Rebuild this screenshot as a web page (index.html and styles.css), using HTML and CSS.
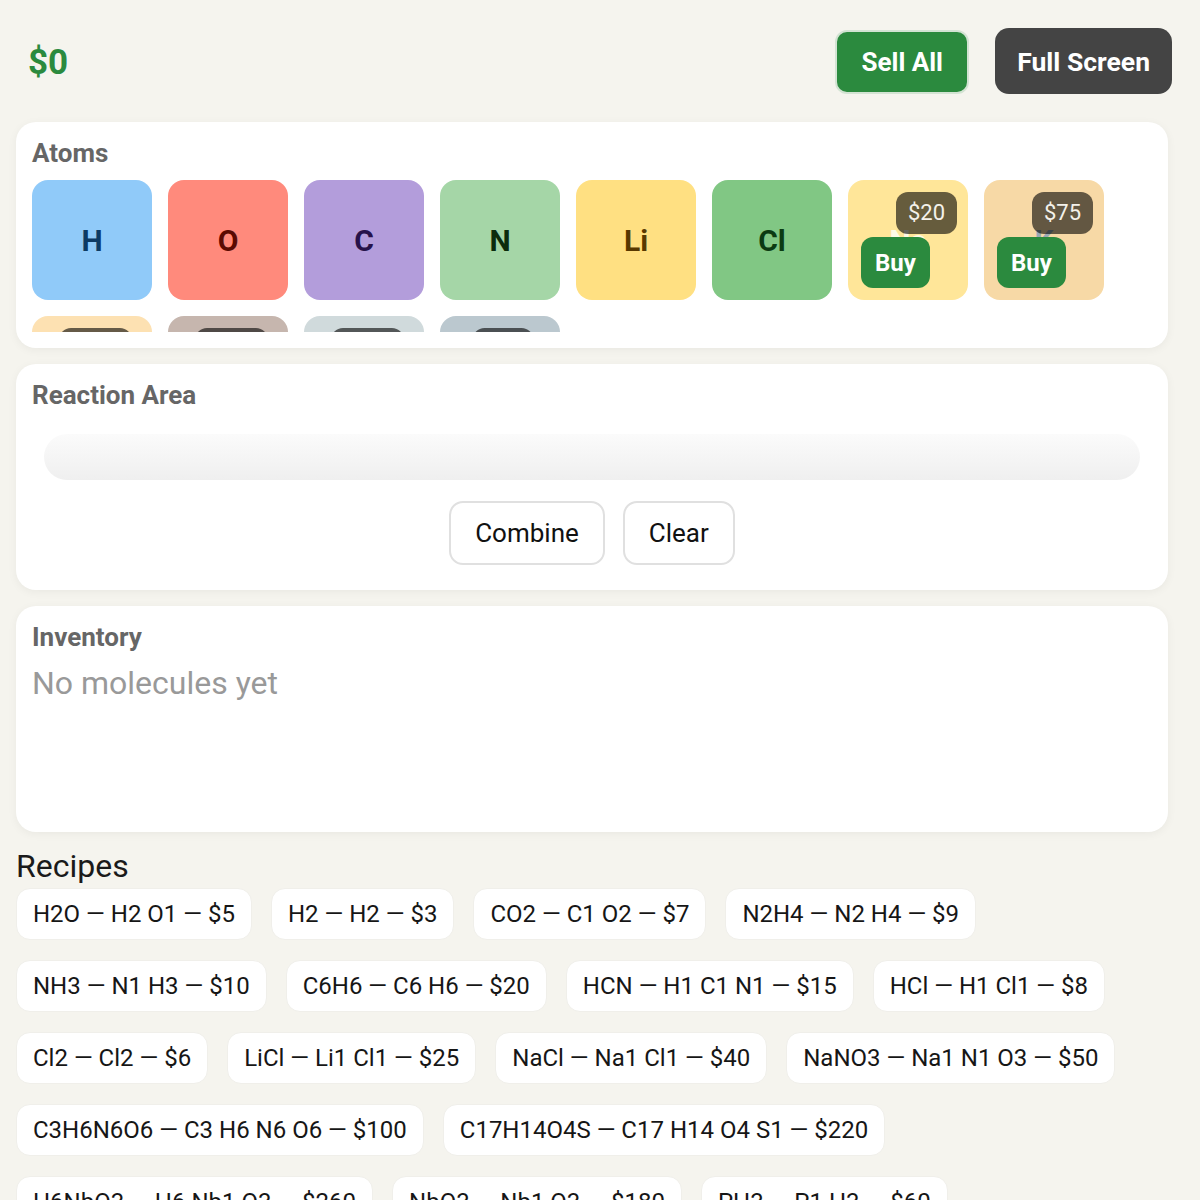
FILE: index.html
```html
<!DOCTYPE html>
<html lang="en">
<head>
  <meta charset="UTF-8">
  <title>Atom Lab</title>
  <link rel="stylesheet" href="styles.css">
</head>
<body>

  <div class="app">

    <!-- top bar -->
    <div class="topbar">
      <div class="money" id="money">$0</div>
      <button class="btn-sell">Sell All</button>
    </div>
    <button class="btn-full">Full Screen</button>

    <!-- atom shop -->
    <div class="panel">
      <div class="panel-title">Atoms</div>
      <div class="atoms">
        <div class="atom atom-h"><span class="sym">H</span></div>
        <div class="atom atom-o"><span class="sym">O</span></div>
        <div class="atom atom-c"><span class="sym">C</span></div>
        <div class="atom atom-n"><span class="sym">N</span></div>
        <div class="atom atom-li"><span class="sym">Li</span></div>
        <div class="atom atom-cl"><span class="sym">Cl</span></div>
        <div class="atom atom-na locked">
          <span class="sym">Na</span>
          <span class="price">$20</span>
          <button class="btn-buy">Buy</button>
        </div>
        <div class="atom atom-k locked">
          <span class="sym">K</span>
          <span class="price">$75</span>
          <button class="btn-buy">Buy</button>
        </div>
        <div class="atom atom-s locked row2">
          <span class="sym">S</span>
          <span class="price">$120</span>
          <button class="btn-buy">Buy</button>
        </div>
        <div class="atom atom-fe locked row2">
          <span class="sym">Fe</span>
          <span class="price">$150</span>
          <button class="btn-buy">Buy</button>
        </div>
        <div class="atom atom-nb locked row2">
          <span class="sym">Nb</span>
          <span class="price">$200</span>
          <button class="btn-buy">Buy</button>
        </div>
        <div class="atom atom-p locked row2">
          <span class="sym">P</span>
          <span class="price">$90</span>
          <button class="btn-buy">Buy</button>
        </div>
      </div>
    </div>

    <!-- mixing -->
    <div class="panel">
      <div class="panel-title">Reaction Area</div>
      <div class="dropzone"></div>
      <div class="actions">
        <button class="btn-plain">Combine</button>
        <button class="btn-plain">Clear</button>
      </div>
    </div>

    <!-- molecules made so far -->
    <div class="panel">
      <div class="panel-title">Inventory</div>
      <div class="empty">No molecules yet</div>
    </div>

    <h2 class="recipes-title">Recipes</h2>
    <div class="recipes">
      <div class="recipe">H2O — H2 O1 — $5</div>
      <div class="recipe">H2 — H2 — $3</div>
      <div class="recipe">CO2 — C1 O2 — $7</div>
      <div class="recipe">N2H4 — N2 H4 — $9</div>
      <div class="recipe">NH3 — N1 H3 — $10</div>
      <div class="recipe">C6H6 — C6 H6 — $20</div>
      <div class="recipe">HCN — H1 C1 N1 — $15</div>
      <div class="recipe">HCl — H1 Cl1 — $8</div>
      <div class="recipe">Cl2 — Cl2 — $6</div>
      <div class="recipe">LiCl — Li1 Cl1 — $25</div>
      <div class="recipe">NaCl — Na1 Cl1 — $40</div>
      <div class="recipe">NaNO3 — Na1 N1 O3 — $50</div>
      <div class="recipe">C3H6N6O6 — C3 H6 N6 O6 — $100</div>
      <div class="recipe">C17H14O4S — C17 H14 O4 S1 — $220</div>
      <div class="recipe">H6NbO3 — H6 Nb1 O3 — $260</div>
      <div class="recipe">NbO3 — Nb1 O3 — $180</div>
      <div class="recipe">PH3 — P1 H3 — $60</div>
    </div>

  </div>

</body>
</html>
```

FILE: styles.css
```css
* {
  box-sizing: border-box;
}
body {
  font-family: Roboto, "Liberation Sans", Arial, sans-serif;
  background: #f5f4ee;
  margin: 0;
  padding: 16px;
  color: #111;
}
button {
  font-family: inherit;
  cursor: pointer;
}
.app {
  max-width: 1152px;
}

/* top bar */
.topbar {
  display: flex;
  align-items: center;
  justify-content: space-between;
  height: 90px;
  padding: 2px 199px 0 12px;
  margin-bottom: 16px;
}
.money {
  color: #2b8a3e;
  font-size: 35px;
  font-weight: 700;
}
.btn-sell {
  height: 64px;
  padding: 0 24px;
  background: #2b8a3e;
  color: #fff;
  border: 2px solid #d3e3d3;
  border-radius: 12px;
  font-size: 26px;
  font-weight: 700;
}
.btn-full {
  position: fixed;
  top: 28px;
  right: 28px;
  height: 66px;
  padding: 0 22px;
  background: #444;
  color: #fff;
  border: none;
  border-radius: 14px;
  font-size: 26.5px;
  font-weight: 700;
}

/* panels */
.panel {
  background: #fff;
  border-radius: 20px;
  padding: 16px;
  min-height: 226px;
  margin-bottom: 16px;
  box-shadow: 0 2px 10px rgba(0,0,0,0.05);
}
.panel-title {
  color: #666;
  font-size: 26px;
  font-weight: 700;
  line-height: 30px;
}

/* atoms */
.atoms {
  display: grid;
  grid-template-columns: repeat(auto-fill, 120px);
  gap: 16px;
  height: 152px;
  overflow: hidden;
  margin-top: 12px;
}
.atom {
  position: relative;
  width: 120px;
  height: 120px;
  border-radius: 16px;
  display: flex;
  align-items: center;
  justify-content: center;
}
.sym {
  font-size: 30px;
  font-weight: 700;
}
.atom-h { background: #90caf9; color: #0d3a63; }
.atom-o { background: #ff8a7c; color: #5a0a02; }
.atom-c { background: #b39ddb; color: #27124a; }
.atom-n { background: #a5d6a7; color: #0c2c0c; }
.atom-li { background: #ffe082; color: #583800; }
.atom-cl { background: #81c784; color: #0b3b12; }
.atom-na { background: #ffe699; color: #fffbe8; }
.atom-k { background: #f7d9a6; color: #9aa8b4; }
.atom-s { background: #fde1b2; color: #fff; }
.atom-fe { background: #c6b6ae; color: #fff; }
.atom-nb { background: #d0dadc; color: #fff; }
.atom-p { background: #bbc8cf; color: #fff; }

.price {
  position: absolute;
  top: 12px;
  right: 11px;
  height: 42px;
  line-height: 42px;
  padding: 0 12px;
  border-radius: 12px;
  background: rgba(0,0,0,0.6);
  color: #f4f1ea;
  font-size: 22px;
}
.row2 .price {
  right: auto;
  left: 50%;
  transform: translateX(-45%);
}
.btn-buy {
  position: absolute;
  left: 13px;
  bottom: 12px;
  height: 51px;
  padding: 0 14px;
  background: #2b8a3e;
  color: #fff;
  border: none;
  border-radius: 12px;
  font-size: 24px;
  font-weight: 700;
}

/* reaction */
.dropzone {
  height: 46px;
  margin: 24px 12px 0;
  border-radius: 23px;
  background: linear-gradient(to bottom, #fbfbfb, #efefef);
}
.actions {
  display: flex;
  justify-content: center;
  gap: 18px;
  margin-top: 21px;
}
.btn-plain {
  height: 64px;
  padding: 0 24px;
  background: #fff;
  color: #111;
  border: 2px solid #e0e0e0;
  border-radius: 14px;
  font-size: 26px;
}

/* inventory */
.empty {
  color: #999;
  font-size: 32px;
  line-height: 38px;
  margin-top: 12px;
}

/* recipes */
.recipes-title {
  font-size: 32px;
  font-weight: 400;
  line-height: 36px;
  margin: 16px 0 4px;
  color: #1a1a1a;
}
.recipes {
  display: flex;
  flex-wrap: wrap;
  gap: 20px 19px;
}
.recipe {
  height: 52px;
  line-height: 50px;
  padding: 0 16px;
  background: #fff;
  border: 1px solid #f0efea;
  border-radius: 14px;
  font-size: 24px;
  color: #161616;
}
```
